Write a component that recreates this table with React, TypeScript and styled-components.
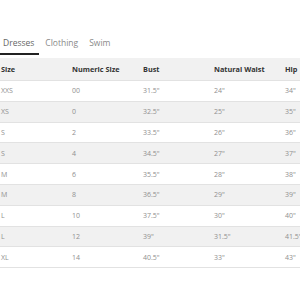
import React from "react";
import { styled, createGlobalStyle } from "styled-components";

const rows: [string, string, string, string, string][] = [
  ["XXS", "00", "31.5\"", "24\"", "34\""],
  ["XS", "0", "32.5\"", "25\"", "35\""],
  ["S", "2", "33.5\"", "26\"", "36\""],
  ["S", "4", "34.5\"", "27\"", "37\""],
  ["M", "6", "35.5\"", "28\"", "38\""],
  ["M", "8", "36.5\"", "29\"", "39\""],
  ["L", "10", "37.5\"", "30\"", "40\""],
  ["L", "12", "39\"", "31.5\"", "41.5\""],
  ["XL", "14", "40.5\"", "33\"", "43\""],
];

const headers = ["Size", "Numeric Size", "Bust", "Natural Waist", "Hip"];
const tabs = ["Dresses", "Clothing", "Swim"];

export default function App() {
  return (
    <>
      <GlobalStyle />
      <Page>
        <Tabs>
          {tabs.map((t, i) => (
            <Tab key={t} $active={i === 0}>
              {t}
            </Tab>
          ))}
        </Tabs>
        <Table>
          <thead>
            <tr>
              {headers.map((h) => (
                <Th key={h}>{h}</Th>
              ))}
            </tr>
          </thead>
          <tbody>
            {rows.map((r, i) => (
              <Row key={i} $shaded={i % 2 === 1}>
                {r.map((c, j) => (
                  <Td key={j}>{c}</Td>
                ))}
              </Row>
            ))}
          </tbody>
        </Table>
      </Page>
    </>
  );
}

const GlobalStyle = createGlobalStyle`
  html, body {
    margin: 0;
    background: #fff;
    overflow: hidden;
  }
  body {
    font-family: "Open Sans", "Liberation Sans", sans-serif;
  }
`;

const Page = styled.div`
  width: 300px;
  height: 300px;
  overflow: hidden;
  padding-top: 36px;
  box-sizing: border-box;
`;

const Tabs = styled.div`
  display: flex;
  gap: 3px;
  padding-bottom: 3px;
`;

const Tab = styled.div<{ $active?: boolean }>`
  padding: 0 5px 3px 3px;
  font-size: 8.5px;
  line-height: 14px;
  color: ${(p) => (p.$active ? "#666" : "#8a8a8a")};
  border-bottom: 2px solid ${(p) => (p.$active ? "#222" : "transparent")};
`;

const Table = styled.table`
  border-collapse: collapse;
  table-layout: fixed;
  width: 355px;
  font-size: 7px;
`;

const Th = styled.th`
  width: 70px;
  height: 22px;
  padding: 0 0 0 1px;
  text-align: left;
  font-weight: 700;
  font-size: 7.3px;
  color: #333;
  background: #f1f1f1;
  border-bottom: 1px solid #e2e2e2;
`;

const Row = styled.tr<{ $shaded?: boolean }>`
  background: ${(p) => (p.$shaded ? "#f1f1f1" : "#fff")};
  border-bottom: 1px solid #e2e2e2;
`;

const Td = styled.td`
  height: 19.8px;
  padding: 0 0 0 1px;
  color: #909090;
  white-space: nowrap;
`;
